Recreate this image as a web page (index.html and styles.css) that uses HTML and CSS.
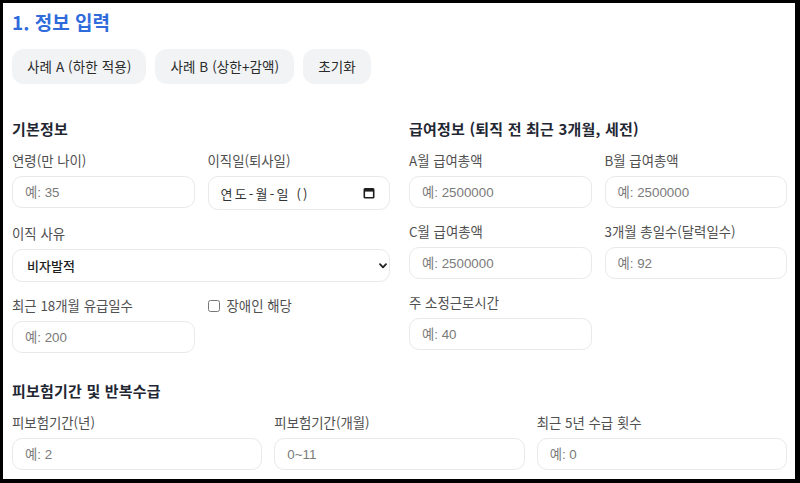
FILE: index.html
```html
<!DOCTYPE html>
<html lang="ko">
<head>
<meta charset="utf-8">
<title>정보 입력</title>
<link rel="stylesheet" href="styles.css">
</head>
<body>
<div class="frame">
  <section class="panel">
    <h2 class="title">1. 정보 입력</h2>
    <div class="presets">
      <button class="chip" type="button">사례 A (하한 적용)</button>
      <button class="chip" type="button">사례 B (상한+감액)</button>
      <button class="chip" type="button">초기화</button>
    </div>

    <div class="cols">
      <div class="group">
        <h3 class="group-title">기본정보</h3>
        <div class="grid2 left-grid">
          <div class="field">
            <label class="label">연령(만 나이)</label>
            <input class="input" type="text" placeholder="예: 35">
          </div>
          <div class="field">
            <label class="label">이직일(퇴사일)</label>
            <div class="input date">
              <span class="date-text">연도-월-일 ()</span>
              <svg class="cal" width="12" height="12" viewBox="0 0 12 12" aria-hidden="true">
                <rect x="1.3" y="1.8" width="9.4" height="8.9" fill="none" stroke="#1e1e1e" stroke-width="1.6" rx="0.8"/>
                <rect x="1.3" y="1.8" width="9.4" height="2.8" fill="#1e1e1e"/>
              </svg>
            </div>
          </div>
          <div class="field span2">
            <label class="label">이직 사유</label>
            <div class="select-wrap">
              <select class="input select">
                <option>비자발적</option>
                <option>자발적</option>
              </select>
              <svg class="chev" width="8" height="6" viewBox="0 0 8 6" aria-hidden="true">
                <path d="M1 1.2 L4 4.4 L7 1.2" fill="none" stroke="#222" stroke-width="1.8" stroke-linecap="round" stroke-linejoin="round"/>
              </svg>
            </div>
          </div>
          <div class="field">
            <label class="label">최근 18개월 유급일수</label>
            <input class="input" type="text" placeholder="예: 200">
          </div>
          <div class="field">
            <label class="check"><input type="checkbox" class="cb">장애인 해당</label>
          </div>
        </div>
      </div>

      <div class="group">
        <h3 class="group-title">급여정보 (퇴직 전 최근 3개월, 세전)</h3>
        <div class="grid2">
          <div class="field">
            <label class="label">A월 급여총액</label>
            <input class="input" type="text" placeholder="예: 2500000">
          </div>
          <div class="field">
            <label class="label">B월 급여총액</label>
            <input class="input" type="text" placeholder="예: 2500000">
          </div>
          <div class="field">
            <label class="label">C월 급여총액</label>
            <input class="input" type="text" placeholder="예: 2500000">
          </div>
          <div class="field">
            <label class="label">3개월 총일수(달력일수)</label>
            <input class="input" type="text" placeholder="예: 92">
          </div>
          <div class="field">
            <label class="label">주 소정근로시간</label>
            <input class="input" type="text" placeholder="예: 40">
          </div>
        </div>
      </div>
    </div>

    <div class="group sec3">
      <h3 class="group-title">피보험기간 및 반복수급</h3>
      <div class="grid3">
        <div class="field">
          <label class="label">피보험기간(년)</label>
          <input class="input" type="text" placeholder="예: 2">
        </div>
        <div class="field">
          <label class="label">피보험기간(개월)</label>
          <input class="input" type="text" placeholder="0~11">
        </div>
        <div class="field">
          <label class="label">최근 5년 수급 횟수</label>
          <input class="input" type="text" placeholder="예: 0">
        </div>
      </div>
    </div>
  </section>
</div>
</body>
</html>
```

FILE: styles.css
```css
* { box-sizing: border-box; }

html, body {
  margin: 0;
  padding: 0;
  background: #ffffff;
}

body {
  font-family: "Noto Sans CJK KR", "Noto Sans", sans-serif;
  color: #222;
}

.frame {
  width: 800px;
  height: 483px;
  border-style: solid;
  border-color: #000;
  border-width: 3px 5px 4px 3px;
  overflow: hidden;
  background: #fff;
}

.panel {
  padding: 5px 8px 0 9px;
}

.title {
  margin: 0;
  font-size: 19px;
  line-height: 28px;
  font-weight: 700;
  color: #2f6bdb;
}

.presets {
  display: flex;
  gap: 9px;
  margin-top: 13px;
}

.chip {
  height: 35px;
  padding: 0 15px;
  border: none;
  border-radius: 12px;
  background: #f1f3f5;
  color: #2b2b2b;
  font-family: "Noto Sans CJK KR", "Noto Sans", sans-serif;
  font-size: 13.5px;
  line-height: 19px;
  letter-spacing: 0.1px;
}

.cols {
  display: grid;
  grid-template-columns: 1fr 1fr;
  gap: 19px;
  margin-top: 34px;
}

.group-title {
  margin: 0 0 11px 0;
  font-size: 15px;
  line-height: 22px;
  font-weight: 700;
  color: #1f2733;
  letter-spacing: 0.2px;
}

.grid2 {
  display: grid;
  grid-template-columns: 1fr 1fr;
  column-gap: 13px;
  row-gap: 14px;
  align-items: start;
}

.grid3 {
  display: grid;
  grid-template-columns: 1fr 1fr 1fr;
  column-gap: 12px;
}

.field {
  display: flex;
  flex-direction: column;
}

.span2 {
  grid-column: span 2;
}

.label {
  font-size: 13.4px;
  line-height: 19px;
  color: #505050;
  margin-bottom: 6px;
}

.input {
  height: 32px;
  width: 100%;
  padding: 0 12px;
  border: 1px solid #e7e9ec;
  border-radius: 10px;
  background: #fff;
  font-family: "Liberation Sans", "Noto Sans CJK KR", sans-serif;
  font-size: 13.33px;
  color: #222;
  outline: none;
}

.input::placeholder {
  color: #7a7a7a;
}

.date {
  height: 34px;
  display: flex;
  align-items: center;
  justify-content: space-between;
  padding: 0 14px 0 12px;
}

.date-text {
  font-family: "Noto Sans CJK KR", sans-serif;
  font-size: 13px;
  letter-spacing: 2.2px;
  color: #333;
}

.select-wrap {
  position: relative;
}

.select {
  height: 33px;
  appearance: none;
  -webkit-appearance: none;
  font-family: "Noto Sans CJK KR", sans-serif;
  font-size: 13px;
  font-weight: 500;
  color: #1e1e1e;
  padding-left: 14px;
}

.chev {
  position: absolute;
  right: 3px;
  top: 14px;
}

.check {
  display: flex;
  align-items: center;
  font-size: 13.4px;
  line-height: 19px;
  color: #505050;
}

.cb {
  width: 12px;
  height: 12px;
  margin: 0 7px 0 0;
}

.sec3 {
  margin-top: 27px;
}
```
